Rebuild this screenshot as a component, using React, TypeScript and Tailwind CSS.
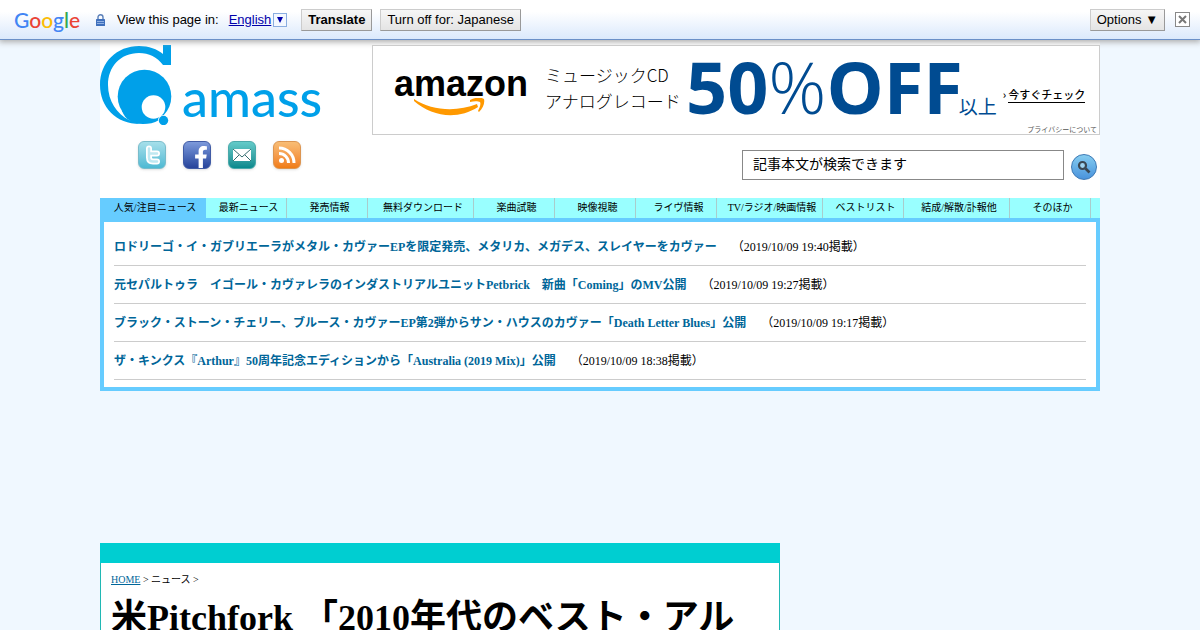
import { FaFacebookF } from "react-icons/fa";

const tabs = [
  { label: "人気/注目ニュース", wide: true },
  { label: "最新ニュース" },
  { label: "発売情報" },
  { label: "無料ダウンロード", wide: true },
  { label: "楽曲試聴" },
  { label: "映像視聴" },
  { label: "ライヴ情報" },
  { label: "TV/ラジオ/映画情報", wide: true },
  { label: "ベストリスト" },
  { label: "結成/解散/訃報他", wide: true },
  { label: "そのほか" },
];

const news = [
  {
    title: "ロドリーゴ・イ・ガブリエーラがメタル・カヴァーEPを限定発売、メタリカ、メガデス、スレイヤーをカヴァー",
    date: "2019/10/09 19:40",
  },
  {
    title: "元セパルトゥラ　イゴール・カヴァレラのインダストリアルユニットPetbrick　新曲「Coming」のMV公開",
    date: "2019/10/09 19:27",
  },
  {
    title: "ブラック・ストーン・チェリー、ブルース・カヴァーEP第2弾からサン・ハウスのカヴァー「Death Letter Blues」公開",
    date: "2019/10/09 19:17",
  },
  {
    title: "ザ・キンクス『Arthur』50周年記念エディションから「Australia (2019 Mix)」公開",
    date: "2019/10/09 18:38",
  },
];

const barButton =
  "h-[22px] border border-[#ccc] border-r-[#999] border-b-[#999] bg-linear-to-b from-[#f6f6f6] to-[#e4e4e4] px-1.5 text-[13px] leading-5 whitespace-nowrap";

function TranslateBar() {
  return (
    <div className="relative flex h-10 items-center border-b border-[#6b90c8] bg-linear-to-b from-white from-30% to-[#dbe9fc] pr-2.5 pl-3.5 font-['Liberation_Sans',sans-serif] text-[13px] shadow-[0_1px_6px_1px_#aaa]">
      <div className="w-[82px] font-[Lato,sans-serif] text-[21px] leading-8 font-medium">
        <span className="text-[#4285f4]">G</span>
        <span className="text-[#ea4335]">o</span>
        <span className="text-[#fbbc05]">o</span>
        <span className="text-[#4285f4]">g</span>
        <span className="text-[#34a853]">l</span>
        <span className="text-[#ea4335]">e</span>
      </div>
      <svg className="h-3 w-[9px]" viewBox="0 0 9 12">
        <path d="M2 6V3.2a2.5 2.5 0 0 1 5 0V6" fill="none" stroke="#5a7fb8" strokeWidth="1.4" />
        <rect x="0" y="5" width="9" height="7" rx="0.6" fill="#3f70bc" />
        <path d="M1 7.5h7M1 9.5h7" stroke="#9ab8e8" strokeWidth="0.9" />
      </svg>
      <span className="ml-3">View this page in:</span>
      <a href="#" className="ml-2.5 text-[#0000aa] underline">English</a>
      <button aria-label="▼" className="ml-0.5 flex h-3.5 w-3.5 items-center justify-center border border-[#8aaee0] bg-[#f3f8ff]">
        <svg className="h-1.5 w-1.5" viewBox="0 0 6 6">
          <path d="M0 0h6L3 6z" fill="#0000aa" />
        </svg>
      </button>
      <button className={`${barButton} ml-3.5 font-bold`}>Translate</button>
      <button className={`${barButton} ml-2`}>Turn off for: Japanese</button>
      <button className={`${barButton} ml-auto`}>Options ▼</button>
      <button aria-label="×" className="ml-2.5 flex h-[15px] w-[15px] items-center justify-center border border-[#888] bg-white">
        <svg className="h-[9px] w-[9px]" viewBox="0 0 9 9">
          <path d="M1 1l7 7M8 1L1 8" stroke="#777" strokeWidth="2" />
        </svg>
      </button>
    </div>
  );
}

function Logo() {
  return (
    <a href="#" className="flex h-20 items-start text-[#00a0e9]">
      <svg className="h-20 w-[72px] shrink-0" viewBox="0 0 72 80">
        <path
          d="M63 0h8v20h-8C57 12 49 8 39 8C20 8 8 22 8 40C8 56 17 69 29 75L40 79C16 79 0 62 0 40C0 17 17 1 39 1C49 1 57 4 63 9z"
          fill="#00a0e9"
        />
        <circle cx="44.500" cy="51.500" r="26.800" fill="#00a0e9" />
        <path d="M22 66C25 74 32 79 43 79C49 79 54 78 59 75L50 60z" fill="#00a0e9" />
        <circle cx="53.500" cy="62" r="11.800" fill="#fff" />
        <circle cx="63.500" cy="75.500" r="5.500" fill="#fff" />
        <circle cx="63.500" cy="75.500" r="4.700" fill="#00a0e9" />
      </svg>
      <span className="ml-2.5 pt-[22px] font-[Lato,sans-serif] text-[52px] leading-[60px] font-medium">amass</span>
    </a>
  );
}

function Banner() {
  return (
    <a href="#" className="relative flex h-[90px] w-[728px] shrink-0 border border-[#ccc] bg-white whitespace-nowrap text-black">
      <div className="w-[172px] pt-[18px] pl-[21px]">
        <div className="font-['Liberation_Sans',sans-serif] text-[36px] leading-10 font-bold">amazon</div>
        <svg className="-mt-1.5 ml-5 h-5 w-[72px]" viewBox="0 0 72 20">
          <path d="M0 1C18 13 43 14 63 6L64 9C44 22 18 19 0 3z" fill="#ff9900" />
          <path d="M56 2C62-1 67-1 70 1C71 5 69 10 65 14L64 13C66 9 67 6 66 4C64 3 60 3 56 4z" fill="#ff9900" />
        </svg>
      </div>
      <div className="w-[141px] pt-4 font-['Noto_Sans_CJK_JP',sans-serif] text-[17px] leading-[26px] font-light">
        <p>ミュージックCD</p>
        <p>アナログレコード</p>
      </div>
      <div className="flex items-baseline font-['Open_Sans','Noto_Sans_CJK_JP',sans-serif] text-[#004b91]">
        <span className="text-[72px] leading-[80px] font-bold">50</span>
        <span className="text-[72px] leading-[80px] font-light">%</span>
        <span className="text-[72px] leading-[80px] font-bold">OFF</span>
        <span className="-ml-1 text-[19px]">以上</span>
      </div>
      <div className="ml-1.5 flex items-start pt-10 font-['Noto_Sans_CJK_JP',sans-serif] text-[11px] leading-4 font-medium">
        <span className="mr-0.5">›</span>
        <span className="border-b border-black">今すぐチェック</span>
      </div>
      <span className="absolute right-0.5 bottom-0 font-['Noto_Sans_CJK_JP',sans-serif] text-[7px] leading-[10px] text-[#555]">
        プライバシーについて
      </span>
    </a>
  );
}

const socialButton = "flex h-7 w-7 justify-center overflow-hidden rounded-md border shadow-sm";

function SocialLinks() {
  return (
    <div className="flex gap-[17px] pt-1.5 pl-[38px]">
      <a href="#" className={`${socialButton} items-center border-[#79bccb] bg-linear-to-b from-[#a5dfea] to-[#4cb9d3]`}>
        <svg className="h-5 w-5" viewBox="0 0 20 20">
          <path d="M7 3.500v9q0 4 4 4h4M7 8.500h8" fill="none" stroke="#fff" strokeWidth="6" strokeLinecap="round" strokeLinejoin="round" />
          <path d="M7 3.500v9q0 4 4 4h4M7 8.500h8" fill="none" stroke="#bfe8f1" strokeWidth="2.500" strokeLinecap="round" />
        </svg>
      </a>
      <a href="#" className={`${socialButton} items-end border-[#405ba5] bg-linear-to-b from-[#7d9adb] to-[#28449b] pl-2`}>
        <FaFacebookF className="h-[22px] w-4 text-white" />
      </a>
      <a href="#" className={`${socialButton} items-center border-[#4aa9aa] bg-linear-to-b from-[#63cbc9] to-[#04898d]`}>
        <svg className="h-3 w-[18px]" viewBox="0 0 18 12">
          <rect width="18" height="12" fill="#fff" />
          <path d="M0 0l9 8 9-8M0 12l6-6M18 12l-6-6" fill="none" stroke="#356c70" />
        </svg>
      </a>
      <a href="#" className={`${socialButton} items-center border-[#dc9551] bg-linear-to-b from-[#f8bd75] to-[#f07c12]`}>
        <svg className="h-5 w-5" viewBox="0 0 20 20">
          <circle cx="4.500" cy="15.500" r="2.500" fill="#fff" />
          <path d="M2 8.500a9.500 9.500 0 0 1 9.500 9.500M2 3a15 15 0 0 1 15 15" fill="none" stroke="#fff" strokeWidth="3" />
        </svg>
      </a>
    </div>
  );
}

export default function App() {
  return (
    <div className="min-h-screen bg-[#f0f8ff] font-['Liberation_Serif','Noto_Sans_CJK_JP',serif] text-black">
      <TranslateBar />
      <div className="mx-auto max-w-[1000px]">
        <header className="bg-white">
          <div className="flex justify-between pt-[5px]">
            <Logo />
            <Banner />
          </div>
          <div className="flex h-[63px] items-start justify-between pr-[3px]">
            <SocialLinks />
            <form className="flex items-center pt-[15px]">
              <input
                type="text"
                aria-label="記事本文が検索できます"
                defaultValue="記事本文が検索できます"
                className="h-[30px] w-[322px] border border-[#888] bg-white px-2.5 pb-1 font-['Liberation_Sans','Noto_Sans_CJK_JP',sans-serif] text-[14px]"
              />
              <button
                type="button"
                aria-label="検索"
                className="mt-1 ml-[7px] flex h-[26px] w-[26px] items-center justify-center rounded-full border border-[#3c78b4] bg-linear-to-b from-[#86cdf0] to-[#4a93dc]"
              >
                <svg className="h-3.5 w-3.5" viewBox="0 0 14 14">
                  <circle cx="5.500" cy="5.500" r="3.500" fill="#9fd3ef" stroke="#3a4752" strokeWidth="2.200" />
                  <path d="M8.500 8.500l4 4" stroke="#3a4752" strokeWidth="2.600" />
                </svg>
              </button>
            </form>
          </div>
        </header>

        <nav className="flex bg-[#99ffff] text-[10px] leading-5">
          {tabs.map((tab, i) => (
            <a
              key={tab.label}
              href="#"
              className={`h-5 border-r pl-[5px] text-center whitespace-nowrap ${tab.wide ? "w-[106px]" : "w-[81px]"} ${
                i === 0 ? "border-[#66ccff] bg-[#66ccff]" : "border-[#a9cccc]"
              }`}
            >
              {tab.label}
            </a>
          ))}
        </nav>
        <ul className="border-4 border-[#66ccff] bg-white px-2.5 pt-1.5 pb-[7px] text-[12px]">
          {news.map((item) => (
            <li key={item.date} className="flex h-[38px] items-center border-b border-[#ccc]">
              <a href="#" className="font-bold text-[#006699]">{item.title}</a>
              <span className="ml-[15px]">（{item.date}掲載）</span>
            </li>
          ))}
        </ul>

        <article className="mt-[152px] max-w-[680px] border border-t-0 border-[#20b8b4] bg-white">
          <div className="-mx-px h-5 bg-[#00ced1]" />
          <div className="px-2.5 pt-2.5">
            <div className="text-[10px] leading-[14px]">
              <a href="#" className="text-[#006699] underline">HOME</a> &gt; ニュース &gt;
            </div>
            <h1 className="pt-2 text-[36px] leading-[46px] font-bold">米Pitchfork 「2010年代のベスト・アル</h1>
          </div>
        </article>
      </div>
    </div>
  );
}
